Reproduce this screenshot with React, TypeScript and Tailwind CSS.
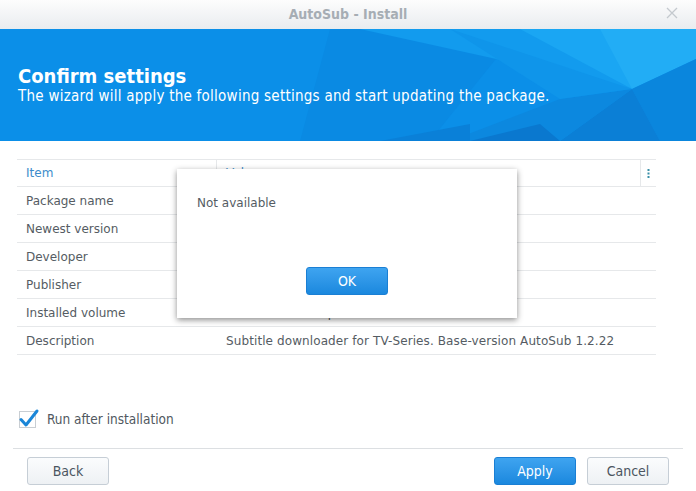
import React from "react";

const rows: [string, string][] = [
  ["Package name", ""],
  ["Newest version", ""],
  ["Developer", ""],
  ["Publisher", ""],
  ["Installed volume", "Volume 1 (Free space: 2.45 TB)"],
  ["Description", "Subtitle downloader for TV-Series. Base-version AutoSub 1.2.22"],
];

function Banner() {
  return (
    <div className="relative h-[112px] bg-[#0b8fe8] overflow-hidden">
      <svg className="absolute inset-0" width="696" height="112" viewBox="0 0 696 112">
        <polygon points="330,0 520,0 430,112 300,112" fill="#0a8ae3" />
        <polygon points="360,0 560,0 632,60" fill="#129bee" />
        <polygon points="520,0 696,0 632,60" fill="#1aa6f3" />
        <polygon points="600,0 696,0 696,30 632,60" fill="#22adf5" />
        <polygon points="632,60 696,30 696,112 660,112" fill="#0a86dd" />
        <polygon points="632,60 660,112 560,112" fill="#0b7fd6" />
        <polygon points="632,60 560,112 450,112 560,70" fill="#0c88df" />
        <polygon points="450,0 632,60 560,70" fill="#0f95ea" />
        <polygon points="470,112 540,95 560,112" fill="#0a78cf" />
        <polygon points="380,112 470,95 470,112" fill="#0a80d8" />
      </svg>
      <div className="relative pl-[18px] pt-[36px] text-white font-['DejaVu_Sans_Condensed',sans-serif]">
        <div className="text-[20px] font-bold leading-[22px]">Confirm settings</div>
        <div className="text-[15px] tracking-[0.25px] leading-[18px]">
          The wizard will apply the following settings and start updating the package.
        </div>
      </div>
    </div>
  );
}

function Btn({ label, primary, w }: { label: string; primary?: boolean; w: string }) {
  return (
    <button
      className={
        primary
          ? `${w} h-[28px] rounded-[3px] border border-[#1a7fd4] bg-gradient-to-b from-[#3ea4f0] to-[#1a88de] text-white text-[14px] font-['DejaVu_Sans_Condensed',sans-serif]`
          : `${w} h-[28px] rounded-[3px] border border-[#c6ced6] bg-gradient-to-b from-[#fbfcfd] to-[#eef1f4] text-[#4b5560] text-[14px] font-['DejaVu_Sans_Condensed',sans-serif]`
      }
    >
      {label}
    </button>
  );
}

export default function App() {
  return (
    <div className="relative w-[696px] h-[491px] bg-white overflow-hidden flex flex-col">
      {/* title bar */}
      <div className="relative h-[29px] flex items-center justify-center bg-gradient-to-b from-[#fdfdfd] to-[#e9ecef]">
        <span className="text-[14px] font-bold text-[#a6adb4] font-['DejaVu_Sans_Condensed',sans-serif]">
          AutoSub - Install
        </span>
        <svg className="absolute right-[18px] top-[7px]" width="12" height="12" viewBox="0 0 12 12">
          <path d="M1 1 L11 11 M11 1 L1 11" stroke="#c4c9ce" strokeWidth="1.3" />
        </svg>
      </div>

      <Banner />

      {/* table */}
      <div className="mt-[18px] ml-[17px] w-[639px] font-['DejaVu_Sans',sans-serif] text-[12px] text-[#555c63]">
        <div className="flex h-[28px] border-t border-b border-[#e6e8ea]">
          <div className="w-[200px] pl-[9px] flex items-center text-[#3c8ccb] border-r border-[#e6e8ea]">Item</div>
          <div className="flex-1 pl-[9px] flex items-center text-[#3c8ccb]">Value</div>
          <div className="w-[16px] border-l border-[#e6e8ea] flex items-center justify-center">
            <svg width="3" height="11" viewBox="0 0 3 11">
              <rect x="0.5" y="1" width="2" height="2" fill="#3a8fa8" />
              <rect x="0.5" y="4.5" width="2" height="2" fill="#3a8fa8" />
              <rect x="0.5" y="8" width="2" height="2" fill="#3a8fa8" />
            </svg>
          </div>
        </div>
        {rows.map(([k, v]) => (
          <div key={k} className="flex h-[28px] border-b border-[#e6e8ea]">
            <div className="w-[200px] pl-[9px] flex items-center">{k}</div>
            <div className="flex-1 pl-[9px] flex items-center whitespace-nowrap tracking-[0.1px]">{v}</div>
          </div>
        ))}
      </div>

      {/* checkbox */}
      <div className="mt-[54px] ml-[19px] h-[20px] flex items-center">
        <div className="relative w-[17px] h-[17px] border border-[#c9ced3] bg-white">
          <svg className="absolute -left-[2px] -top-[4px]" width="22" height="22" viewBox="0 0 22 22">
            <path d="M3 11.5 L8 17 L19 3" fill="none" stroke="#1a86d8" strokeWidth="3" strokeLinecap="round" strokeLinejoin="round" />
          </svg>
        </div>
        <span className="ml-[11px] text-[13.5px] text-[#505860] font-['DejaVu_Sans_Condensed',sans-serif]">
          Run after installation
        </span>
      </div>

      <div className="mt-[19px] mx-[13px] h-[1px] bg-[#dcdfe2]" />

      <div className="mt-[8px] px-[27px] flex items-center">
        <Btn label="Back" w="w-[82px]" />
        <div className="flex-1" />
        <Btn label="Apply" primary w="w-[82px]" />
        <div className="w-[11px]" />
        <Btn label="Cancel" w="w-[82px]" />
      </div>

      {/* modal */}
      <div className="absolute left-[177px] top-[169px] w-[340px] h-[149px] bg-white shadow-[0_2px_6px_rgba(0,0,0,0.45)] flex flex-col">
        <div className="pl-[20px] pt-[25px] text-[12px] text-[#555c63] font-['DejaVu_Sans',sans-serif]">
          Not available
        </div>
        <div className="flex-1" />
        <div className="flex justify-center pb-[23px]">
          <Btn label="OK" primary w="w-[82px]" />
        </div>
      </div>
    </div>
  );
}
